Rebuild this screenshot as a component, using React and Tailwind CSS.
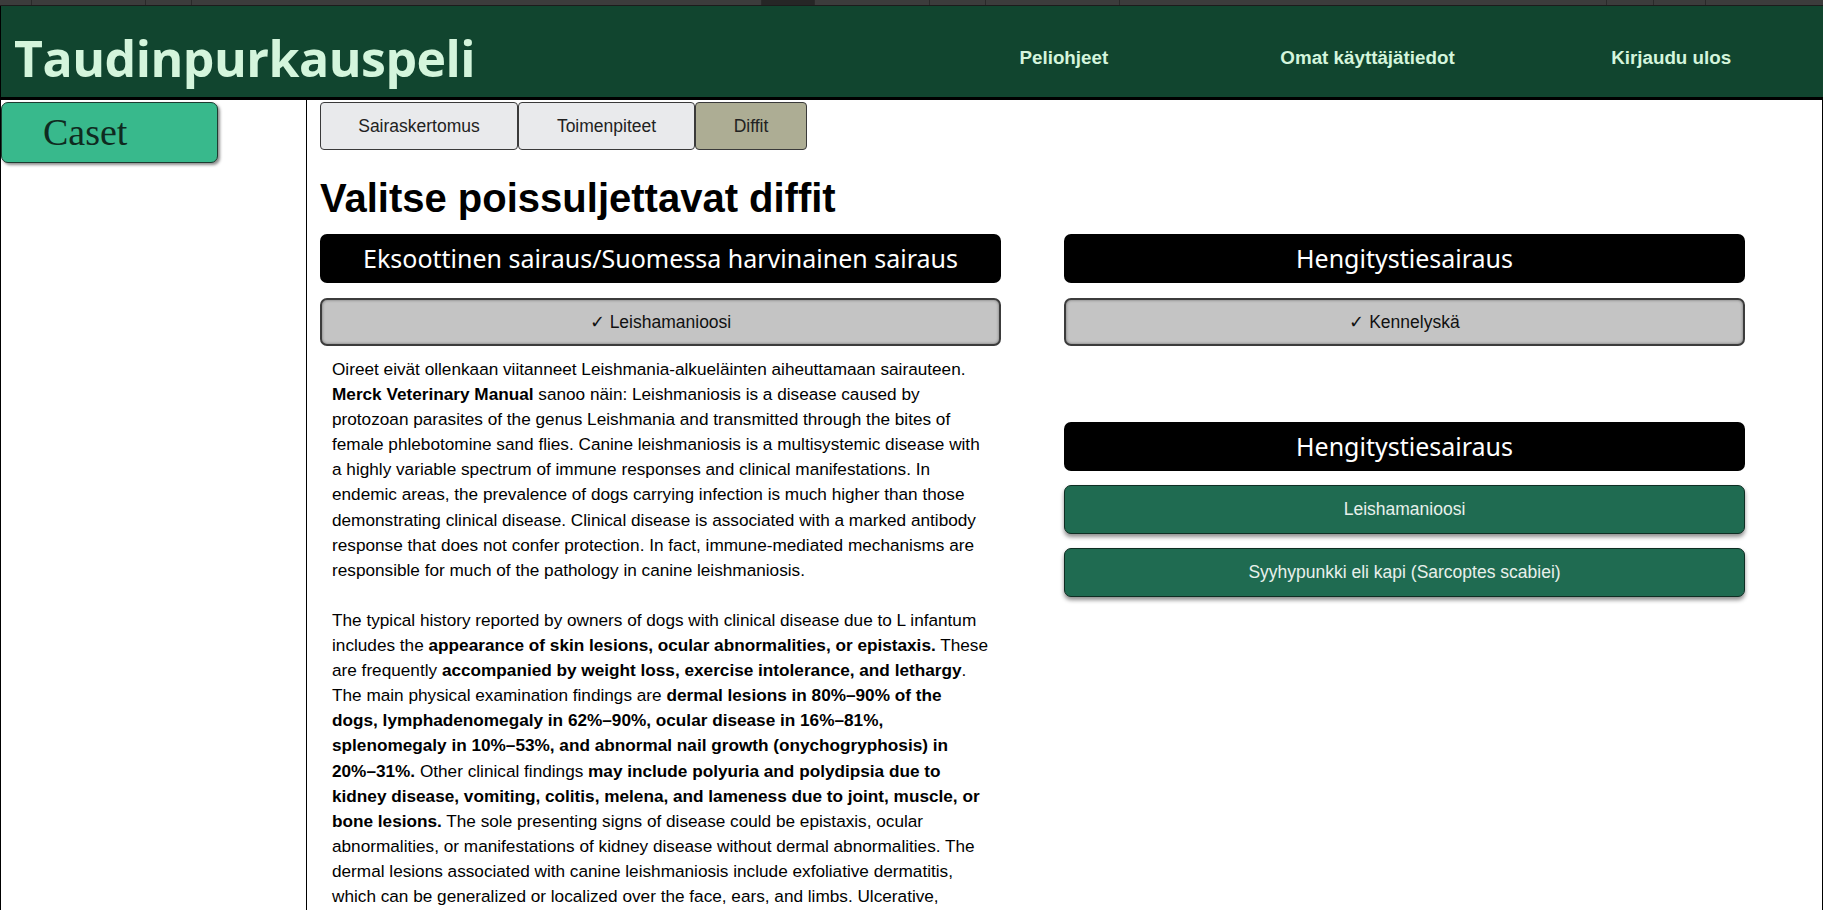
import React from "react";

// ── top strip segments (widths in px, last one fills) ─────────────────────
const STRIP = [32, 114, 46, 570, 53, 115, 56, 134, 487, 47, 52];

function TopStrip() {
  return (
    <div className="flex h-[6px] border-b border-[#1c1c1c] bg-[#3c3c3c]">
      {STRIP.map((w, i) => (
        <div
          key={i}
          className={`h-full shrink-0 border-r border-[#2a2a2a] ${i === 4 ? "bg-[#262626]" : ""}`}
          style={{ width: w }}
        />
      ))}
      <div className="flex-1" />
    </div>
  );
}

// ── header ────────────────────────────────────────────────────────────────
function Header() {
  return (
    <header className="grid h-[94px] grid-cols-2 items-center border-b-[3px] border-l border-black bg-[#11452f] pt-[13px]">
      <h1 className="pl-[13px] font-['Open_Sans',sans-serif] text-[50px] font-bold leading-none tracking-[-0.5px] text-[#d4f5dc]">
        Taudinpurkauspeli
      </h1>
      <nav className="flex font-['Liberation_Sans',Arial,sans-serif] text-[18.8px] font-bold text-[#d4f5dc]">
        <a className="flex-1 text-center">Peliohjeet</a>
        <a className="flex-1 text-center">Omat käyttäjätiedot</a>
        <a className="flex-1 text-center">Kirjaudu ulos</a>
      </nav>
    </header>
  );
}

// ── sidebar ───────────────────────────────────────────────────────────────
function Sidebar() {
  return (
    <aside className="w-[307px] shrink-0 border-l border-r border-black">
      <div className="mt-[2px] flex h-[61px] w-[217px] items-center rounded-[7px] border border-[#1d3b30] bg-[#38b98c] pl-[41px] font-['Liberation_Serif',serif] text-[38px] text-[#0f2a20] shadow-[2px_2px_3px_rgba(0,0,0,0.45)]">
        Caset
      </div>
    </aside>
  );
}

// ── tabs ──────────────────────────────────────────────────────────────────
function Tabs() {
  const tabs = [
    { label: "Sairaskertomus", w: "w-[198px]", active: false },
    { label: "Toimenpiteet", w: "w-[177px]", active: false },
    { label: "Diffit", w: "w-[112px]", active: true },
  ];
  return (
    <div className="mt-[2px] flex">
      {tabs.map((t) => (
        <button
          key={t.label}
          className={`${t.w} h-[48px] rounded-[4px] border border-[#3a3a3a] text-[17.5px] text-[#222] ${
            t.active ? "bg-[#adad94]" : "bg-[#e9eaec]"
          }`}
        >
          {t.label}
        </button>
      ))}
    </div>
  );
}

function CategoryTitle({ children, className = "" }) {
  return (
    <div
      className={`flex h-[49px] items-center justify-center rounded-[7px] bg-black font-['Noto_Sans',sans-serif] text-[25px] text-white ${className}`}
    >
      {children}
    </div>
  );
}

function ChosenDiff({ children }) {
  return (
    <div className="mt-[15px] flex h-[48px] items-center justify-center rounded-[7px] border-2 border-[#3c3c3c] bg-[#c4c4c4] text-[17.5px] text-[#111] shadow-[inset_0_0_3px_rgba(0,0,0,0.45)]">
      {children}
    </div>
  );
}

function OpenDiff({ children }) {
  return (
    <div className="mt-[14px] flex h-[49px] items-center justify-center rounded-[7px] border border-[#0e2e23] bg-[#1f6b51] text-[17.5px] text-[#e8f0eb] shadow-[0_3px_4px_rgba(0,0,0,0.45)]">
      {children}
    </div>
  );
}

// ── explanation text ──────────────────────────────────────────────────────
function Explanation() {
  return (
    <p className="mt-[11px] px-[12px] text-[17.2px] leading-[25.1px] text-black">
      Oireet eivät ollenkaan viitanneet Leishmania-alkueläinten aiheuttamaan sairauteen.
      <br />
      <b>Merck Veterinary Manual</b> sanoo näin: Leishmaniosis is a disease caused by protozoan
      parasites of the genus Leishmania and transmitted through the bites of female phlebotomine
      sand flies. Canine leishmaniosis is a multisystemic disease with a highly variable spectrum of
      immune responses and clinical manifestations. In endemic areas, the prevalence of dogs
      carrying infection is much higher than those demonstrating clinical disease. Clinical disease
      is associated with a marked antibody response that does not confer protection. In fact,
      immune-mediated mechanisms are responsible for much of the pathology in canine leishmaniosis.
      <br />
      <br />
      The typical history reported by owners of dogs with clinical disease due to L infantum
      includes the <b>appearance of skin lesions, ocular abnormalities, or epistaxis.</b> These are
      frequently <b>accompanied by weight loss, exercise intolerance, and lethargy</b>. The main
      physical examination findings are{" "}
      <b>
        dermal lesions in 80%–90% of the dogs, lymphadenomegaly in 62%–90%, ocular disease in
        16%–81%, splenomegaly in 10%–53%, and abnormal nail growth (onychogryphosis) in 20%–31%.
      </b>{" "}
      Other clinical findings{" "}
      <b>
        may include polyuria and polydipsia due to kidney disease, vomiting, colitis, melena, and
        lameness due to joint, muscle, or bone lesions.
      </b>{" "}
      The sole presenting signs of disease could be epistaxis, ocular abnormalities, or
      manifestations of kidney disease without dermal abnormalities. The dermal lesions associated
      with canine leishmaniosis include exfoliative dermatitis, which can be generalized or
      localized over the face, ears, and limbs. Ulcerative, nodular, papular, and pustular
      dermatitis are also seen, as well as mucocutaneous and footpad lesions.
    </p>
  );
}

// ── main content ──────────────────────────────────────────────────────────
function Main() {
  return (
    <main className="flex-1 border-r border-black pl-[13px] pb-10">
      <Tabs />
      <h2 className="mt-[25px] text-[40px] font-bold leading-[46px] text-black">
        Valitse poissuljettavat diffit
      </h2>
      <div className="mt-[13px] grid grid-cols-[681px_681px] gap-x-[63px]">
        <div>
          <CategoryTitle>Eksoottinen sairaus/Suomessa harvinainen sairaus</CategoryTitle>
          <ChosenDiff>✓ Leishamanioosi</ChosenDiff>
          <Explanation />
        </div>
        <div>
          <CategoryTitle>Hengitystiesairaus</CategoryTitle>
          <ChosenDiff>✓ Kennelyskä</ChosenDiff>
          <CategoryTitle className="mt-[76px]">Hengitystiesairaus</CategoryTitle>
          <OpenDiff>Leishamanioosi</OpenDiff>
          <OpenDiff>Syyhypunkki eli kapi (Sarcoptes scabiei)</OpenDiff>
        </div>
      </div>
    </main>
  );
}

export default function App() {
  return (
    <div className="min-h-screen bg-white font-['Liberation_Sans',Arial,sans-serif]">
      <TopStrip />
      <Header />
      <div className="flex min-h-[810px]">
        <Sidebar />
        <Main />
      </div>
    </div>
  );
}
